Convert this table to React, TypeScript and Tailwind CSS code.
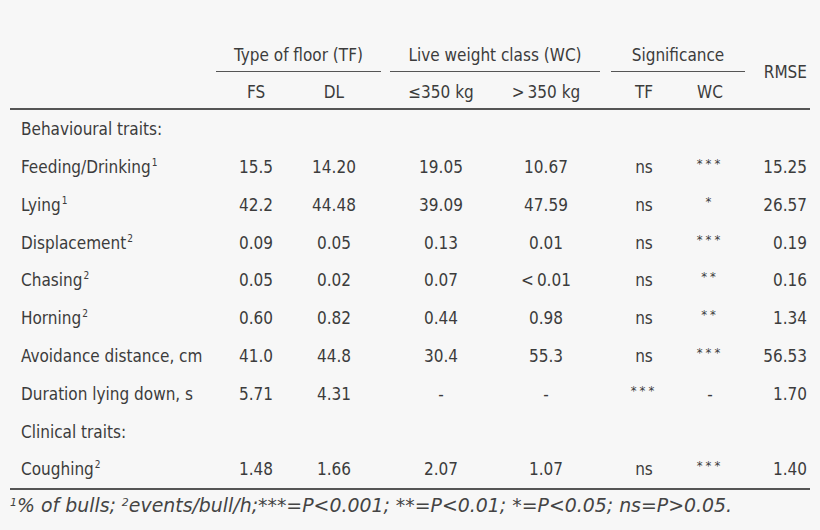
import React from "react";

interface Row {
  label: string;
  sup?: string;
  values?: string[];
  section?: boolean;
}

// column classes, contiguous from x=10 to x=810
const cols = [
  "w-[206px] pl-[11px] text-left",
  "w-[79px] pl-[1px] text-center",
  "w-[93px] pr-[15px] text-center",
  "w-[106px] text-center",
  "w-[106px] pr-[2px] text-center",
  "w-[77px] pl-[11px] text-center",
  "w-[68px] pr-[2px] text-center",
  "w-[65px] pr-[3px] text-right",
];

const rows: Row[] = [
  { label: "Behavioural traits:", section: true },
  { label: "Feeding/Drinking", sup: "1", values: ["15.5", "14.20", "19.05", "10.67", "ns", "***", "15.25"] },
  { label: "Lying", sup: "1", values: ["42.2", "44.48", "39.09", "47.59", "ns", "*", "26.57"] },
  { label: "Displacement", sup: "2", values: ["0.09", "0.05", "0.13", "0.01", "ns", "***", "0.19"] },
  { label: "Chasing", sup: "2", values: ["0.05", "0.02", "0.07", "<0.01", "ns", "**", "0.16"] },
  { label: "Horning", sup: "2", values: ["0.60", "0.82", "0.44", "0.98", "ns", "**", "1.34"] },
  { label: "Avoidance distance, cm", values: ["41.0", "44.8", "30.4", "55.3", "ns", "***", "56.53"] },
  { label: "Duration lying down, s", values: ["5.71", "4.31", "-", "-", "***", "-", "1.70"] },
  { label: "Clinical traits:", section: true },
  { label: "Coughing", sup: "2", values: ["1.48", "1.66", "2.07", "1.07", "ns", "***", "1.40"] },
];

const Cell = ({ value }: { value: string }) => {
  if (/^\*+$/.test(value)) {
    return <span className="relative top-[-5px] text-[13px] tracking-[3px]">{value}</span>;
  }
  if (value.startsWith("<")) {
    return (
      <span>
        <span className="mr-[3px]">&lt;</span>
        {value.slice(1)}
      </span>
    );
  }
  return <span>{value}</span>;
};

const App = () => {
  return (
    <div
      className="w-[820px] h-[530px] bg-[#f7f7f7] text-[#3c3c3c] overflow-hidden"
      style={{ fontFamily: '"DejaVu Sans Condensed", "Liberation Sans", Arial, sans-serif' }}
    >
      <div className="pt-[37px] px-[10px] text-[17px]">
        {/* Header */}
        <div className="flex">
          <div className={cols[0]} />
          <div className="w-[172px] flex flex-col">
            <div className="h-[35px] flex items-center justify-center pt-[3px] mr-[7px] border-b-[1.5px] border-[#555]">
              Type of floor (TF)
            </div>
            <div className="flex h-[36px] items-center pt-[6px]">
              <div className={cols[1]}>FS</div>
              <div className={cols[2]}>DL</div>
            </div>
          </div>
          <div className="w-[212px] flex flex-col">
            <div className="h-[35px] flex items-center justify-center pt-[3px] ml-[2px] border-b-[1.5px] border-[#555]">
              Live weight class (WC)
            </div>
            <div className="flex h-[36px] items-center pt-[6px]">
              <div className={cols[3]}>≤350 kg</div>
              <div className={cols[4]}>
                <span className="mr-[3px]">&gt;</span>350 kg
              </div>
            </div>
          </div>
          <div className="w-[145px] flex flex-col">
            <div className="h-[35px] flex items-center justify-center pt-[3px] ml-[11px] border-b-[1.5px] border-[#555]">
              Significance
            </div>
            <div className="flex h-[36px] items-center pt-[6px]">
              <div className={cols[5]}>TF</div>
              <div className={cols[6]}>WC</div>
            </div>
          </div>
          <div className={`${cols[7]} flex items-center justify-end pt-[1px]`}>RMSE</div>
        </div>
        <div className="h-[2px] bg-[#555]" />

        {/* Body */}
        <div>
          {rows.map((row, i) => (
            <div key={i} className="flex h-[37.8px] items-center pt-[2px]">
              <div className={cols[0]}>
                {row.label}
                {row.sup && <sup className="text-[10px] ml-[1px] top-[-7px]">{row.sup}</sup>}
              </div>
              {row.values?.map((v, j) => (
                <div key={j} className={cols[j + 1]}>
                  <Cell value={v} />
                </div>
              ))}
            </div>
          ))}
        </div>
        <div className="h-[2px] bg-[#555]" />

        {/* Footnote */}
        <div
          className="italic text-[18.9px] text-[#444] pt-[1px]"
          style={{ fontFamily: '"DejaVu Sans", Verdana, sans-serif' }}
        >
          <sup className="text-[11px]">1</sup>% of bulls; <sup className="text-[11px]">2</sup>
          events/bull/h;***=P&lt;0.001; **=P&lt;0.01; *=P&lt;0.05; ns=P&gt;0.05.
        </div>
      </div>
    </div>
  );
};

export default App;
